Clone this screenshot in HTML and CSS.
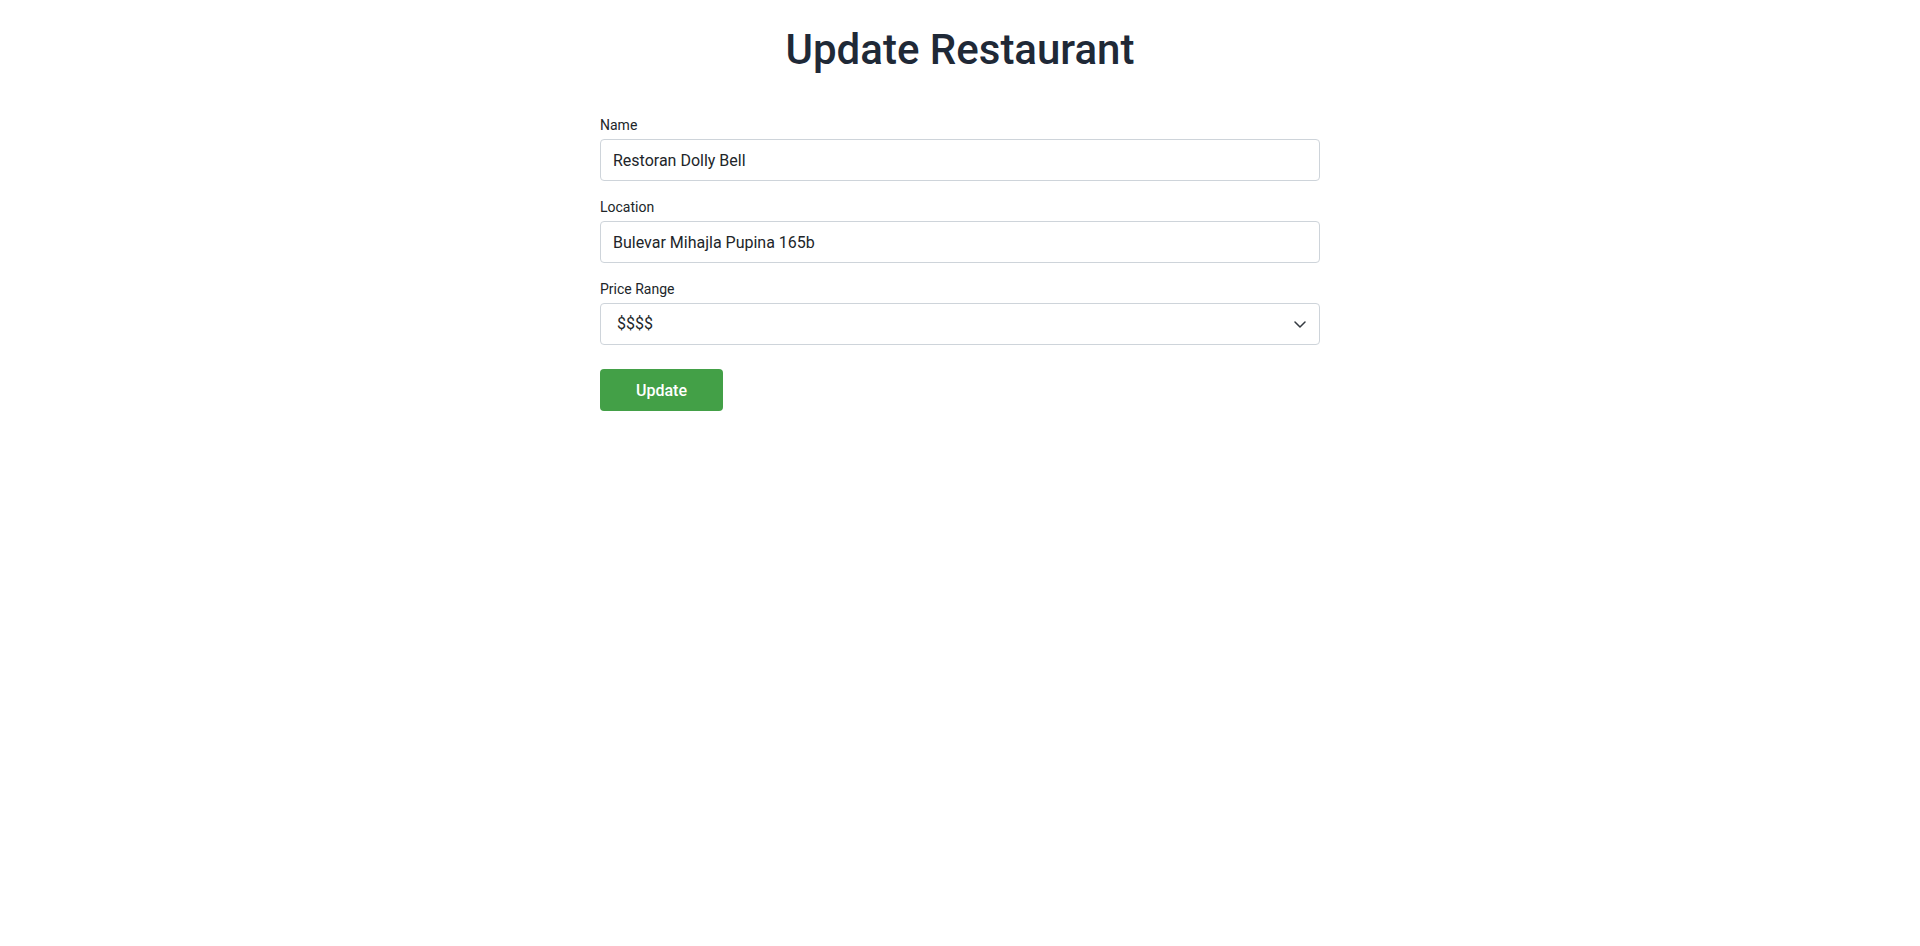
FILE: index.html
```html
<!DOCTYPE html>
<html lang="en">
<head>
<meta charset="utf-8">
<title>Update Restaurant</title>
<link rel="stylesheet" href="styles.css">
</head>
<body>
<main class="page">
  <h1 class="title">Update Restaurant</h1>
  <form class="form">
    <div class="group">
      <label class="label" for="name">Name</label>
      <input class="control" id="name" type="text" value="Restoran Dolly Bell">
    </div>
    <div class="group">
      <label class="label" for="location">Location</label>
      <input class="control" id="location" type="text" value="Bulevar Mihajla Pupina 165b">
    </div>
    <div class="group">
      <label class="label" for="price">Price Range</label>
      <div class="select-wrap">
        <select class="control select" id="price">
          <option>$</option>
          <option>$$</option>
          <option>$$$</option>
          <option selected>$$$$</option>
          <option>$$$$$</option>
        </select>
        <svg class="chevron" width="12" height="7" viewBox="0 0 12 7" aria-hidden="true"><path d="M1 1 L6 6 L11 1" fill="none" stroke="#343a40" stroke-width="1.5" stroke-linecap="round" stroke-linejoin="round"/></svg>
      </div>
    </div>
    <button class="btn" type="button">Update</button>
  </form>
</main>
</body>
</html>
```
FILE: styles.css
```css
* { box-sizing: border-box; }
html, body { margin: 0; padding: 0; background: #ffffff; }
body {
  font-family: Roboto, "Liberation Sans", Arial, sans-serif;
  color: #212529;
}
.page {
  width: 720px;
  margin: 0 auto;
}
.title {
  margin: 25px 0 40px;
  font-size: 42px;
  line-height: 50px;
  font-weight: 500;
  text-align: center;
  color: #1f2937;
}
.form {
  display: flex;
  flex-direction: column;
}
.group {
  display: flex;
  flex-direction: column;
  margin-bottom: 16px;
}
.label {
  font-size: 14px;
  line-height: 20px;
  margin-bottom: 4px;
  color: #212529;
}
.control {
  width: 100%;
  height: 42px;
  padding: 8px 12px;
  font-family: inherit;
  font-size: 16px;
  line-height: 24px;
  color: #212529;
  background: #fff;
  border: 1px solid #ced4da;
  border-radius: 4px;
  outline: none;
}
.select-wrap {
  position: relative;
}
.select {
  appearance: none;
  -webkit-appearance: none;
  padding-left: 16px;
}
.chevron {
  position: absolute;
  right: 14px;
  top: 18px;
  pointer-events: none;
}
.btn {
  align-self: flex-start;
  margin-top: 8px;
  height: 42px;
  padding: 0 36px;
  font-family: inherit;
  font-size: 16px;
  font-weight: 500;
  color: #fff;
  background: #43a047;
  border: none;
  border-radius: 4px;
  cursor: pointer;
}
```
